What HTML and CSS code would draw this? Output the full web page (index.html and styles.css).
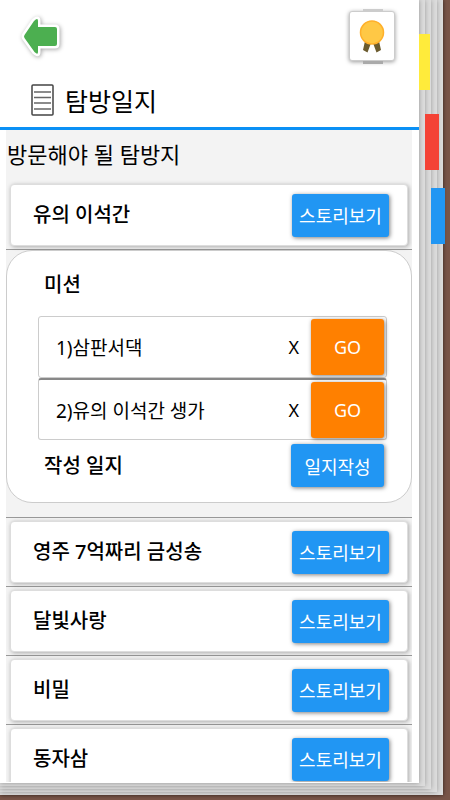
FILE: index.html
```html
<!DOCTYPE html>
<html lang="ko">
<head>
<meta charset="utf-8">
<meta name="viewport" content="width=device-width, initial-scale=1">
<title>탐방일지</title>
<link rel="stylesheet" href="styles.css">
</head>
<body>
<div class="sheet sheet-outer"><div class="sheet"><div class="sheet"><div class="sheet">
<main class="page">
  <header class="header">
    <div class="toolbar">
      <button class="icon-button" type="button" aria-label="뒤로">
        <svg class="back-icon" width="44" height="48" viewBox="0 0 44 48">
          <path d="M4.500 23 L14 9 Q18 5 18 9 V15 H35 Q37 15 37 17 V32 Q37 34 35 34 H18 V40 Q18 43.500 14.500 40 L4.500 26 Q3.500 24.500 4.500 23Z" fill="#4caf50" stroke="#fff" stroke-width="5" stroke-linejoin="round" paint-order="stroke"/>
        </svg>
      </button>
      <button class="icon-button badge-button" type="button" aria-label="배지">
        <svg width="44" height="48" viewBox="0 0 44 48">
          <path d="M15 29 L13 38 L17.500 40.500 L21 31Z M29 29 L31 38 L26.500 40.500 L23 31Z" fill="#6b5b2e"/>
          <circle cx="22" cy="20.500" r="11.500" fill="#ffc845" stroke="#ffb02a" stroke-width="1.500"/>
        </svg>
      </button>
    </div>
    <h1 class="title">
      <svg width="23" height="32" viewBox="0 0 23 32" fill="none" aria-hidden="true">
        <rect x="1" y="1" width="21" height="30" rx="1" stroke="#444" stroke-width="1.500"/>
        <path d="M3 8H20M3 13.500H20M3 19H20M3 25H20" stroke="#666" stroke-width="1.500"/>
      </svg>
      탐방일지
    </h1>
  </header>
  <section class="content">
    <h2 class="section-title">방문해야 될 탐방지</h2>
    <div class="row"><article class="card"><h3>유의 이석간</h3><button class="button" type="button">스토리보기</button></article></div>
    <div class="row row-open">
      <section class="panel">
        <h3 class="panel-title">미션</h3>
        <ul class="missions">
          <li class="mission"><span class="mission-name">1)삼판서댁</span><span class="state">X</span><button class="button go" type="button">GO</button></li>
          <li class="mission"><span class="mission-name">2)유의 이석간 생가</span><span class="state">X</span><button class="button go" type="button">GO</button></li>
        </ul>
        <div class="journal"><h3>작성 일지</h3><button class="button write" type="button">일지작성</button></div>
      </section>
    </div>
    <div class="row"><article class="card"><h3>영주 7억짜리 금성송</h3><button class="button" type="button">스토리보기</button></article></div>
    <div class="row"><article class="card"><h3>달빛사랑</h3><button class="button" type="button">스토리보기</button></article></div>
    <div class="row"><article class="card"><h3>비밀</h3><button class="button" type="button">스토리보기</button></article></div>
    <div class="row"><article class="card"><h3>동자삼</h3><button class="button" type="button">스토리보기</button></article></div>
  </section>
</main>
</div></div></div></div>
<div class="tab tab-yellow"></div>
<div class="tab tab-red"></div>
<div class="tab tab-blue"></div>
</body>
</html>
```
FILE: styles.css
```css
* { box-sizing: border-box; }

body {
  position: relative;
  display: flex;
  height: 100vh;
  margin: 0;
  padding: 0 7px 5px 0;
  overflow: hidden;
  background: #795548;
  color: #000;
  font-family: "Noto Sans", "Noto Sans CJK KR", sans-serif;
}

h1, h2, h3, ul { margin: 0; padding: 0; }
h3 { font-size: 20px; font-weight: 500; line-height: 28px; }
button { font-family: inherit; cursor: pointer; }

/* Stacked sheets behind the page */
.sheet {
  display: flex;
  flex: 1;
  min-width: 0;
  min-height: 0;
  padding: 0 6px 3px 0;
  background: #dcdcdc;
  box-shadow: 0 0 5px rgba(0, 0, 0, 0.3);
}
.sheet-outer { box-shadow: 0 0 4px rgba(0, 0, 0, 0.6); }

.page {
  display: flex;
  flex: 1;
  flex-direction: column;
  min-width: 0;
  background: #fff;
  box-shadow: 0 0 5px rgba(0, 0, 0, 0.35);
}

.header { border-bottom: 3px solid #0a90f5; }
.toolbar {
  display: flex;
  justify-content: space-between;
  align-items: center;
  padding: 11px 24px 0 20px;
}
.icon-button { display: flex; padding: 0; border: 0; background: none; }
.back-icon { filter: drop-shadow(1px 1px 2px rgba(0, 0, 0, 0.35)); }
.badge-button {
  position: relative;
  border: 1px solid #ccc;
  border-radius: 3px;
  background: #fff;
  box-shadow: 0 1px 4px rgba(0, 0, 0, 0.4);
}
.badge-button::before,
.badge-button::after {
  content: "";
  position: absolute;
  left: 13px;
  width: 20px;
  height: 2px;
}
.badge-button::before { top: -3px; background: #ccc; }
.badge-button::after { bottom: -4px; height: 3px; background: #aaa; }
.title {
  display: flex;
  align-items: center;
  gap: 11px;
  height: 66px;
  padding: 12px 31px 0;
  font-size: 25px;
  font-weight: 400;
}

.content {
  flex: 1;
  min-height: 0;
  margin: 0 7px 1px 6px;
  overflow: hidden;
  background: #f3f3f3;
}
.section-title {
  padding: 0 0 3px 1px;
  font-size: 22px;
  font-weight: 400;
  line-height: 48px;
}

.row { padding: 3px 4px; border-bottom: 1px solid #999; }
.row-open { padding: 0 0 14px; }
.card {
  display: flex;
  align-items: center;
  justify-content: space-between;
  height: 62px;
  padding: 0 18px 0 22px;
  border: 1px solid #ddd;
  border-radius: 4px;
  background: #fff;
  box-shadow: 1px 1px 4px rgba(0, 0, 0, 0.3);
}

.button {
  width: 97px;
  height: 43px;
  padding: 0;
  border: 0;
  border-radius: 3px;
  background: #2196f3;
  color: #fff;
  font-size: 18px;
  box-shadow: 1px 1px 4px rgba(0, 0, 0, 0.5);
}

.panel {
  padding: 20px 24px 15px 31px;
  border: 1px solid #ccc;
  border-radius: 26px;
  background: #fff;
}
.panel-title { padding: 0 6px 17px; }
.missions { list-style: none; }
.mission {
  display: flex;
  align-items: center;
  height: 62px;
  padding: 0 2px 0 17px;
  border: 1px solid #ccc;
  border-radius: 3px;
}
.mission + .mission { border-top: 2px solid #888; }
.mission-name { flex: 1; font-size: 19px; }
.state { margin-right: 12px; font-size: 18px; }
.go { width: 73px; height: 56px; background: #ff8000; }
.journal {
  display: flex;
  align-items: center;
  justify-content: space-between;
  padding: 4px 3px 0 6px;
}
.write { width: 93px; }

/* Bookmarks sticking out of the sheets */
.tab { position: absolute; width: 14px; height: 56px; }
.tab-yellow { top: 34px; right: 20px; width: 11px; background: #ffeb3b; }
.tab-red { top: 114px; right: 11px; background: #f44336; }
.tab-blue { top: 188px; right: 5px; background: #2196f3; }
```
